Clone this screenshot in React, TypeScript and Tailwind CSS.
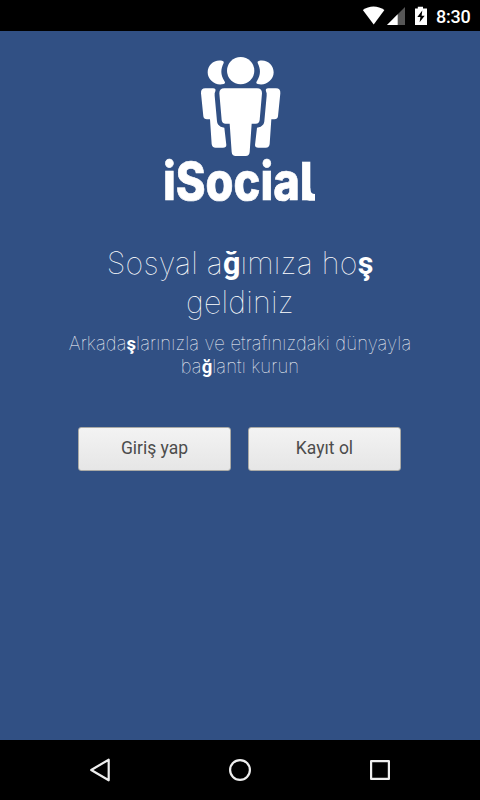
import React from 'react';

function StatusBar() {
  return (
    <header className="flex h-[31px] shrink-0 items-center justify-end bg-black text-white">
      <svg width="76" height="31" viewBox="0 0 76 31" fill="#fff">
        <path d="M2.8 10.1C9 5.3 18 5.3 24.4 10.1L13.7 24.5Z" />
        <path d="M45 7V25H27Z" fill="#565656" />
        <path d="M37.7 14.3V25H27Z" />
        <path d="M55 8.5h2.8V6.7h5.2v1.8H67V25H55Z" />
        <path d="M62.3 10.5L57.3 17h3.1l-.8 5.3 5.1-6.6h-3.1Z" fill="#000" />
      </svg>
      <span className="w-[44px] pt-0.5 text-[18px] font-medium leading-none tracking-[-0.2px]">8:30</span>
    </header>
  );
}

function Logo() {
  return (
    <svg className="shrink-0 overflow-visible" width="170" height="165" viewBox="0 0 510 495" fill="#fff">
      <circle cx="257" cy="77" r="41" />
      <path d="M203 48C178 42 158 60 158 82C158 105 182 124 206 117Q213 115 208 108C196 88 197 72 206 54Q208 49 203 48Z" />
      <path d="M311 48C336 42 356 60 356 82C356 105 332 124 308 117Q301 115 306 108C318 88 317 72 308 54Q306 49 311 48Z" />
      <path d="M208 130H306Q321 130 321 145L314 225Q313 236 302 236H290L284 321Q283 333 272 333H242Q231 333 230 321L224 236H212Q201 236 200 225L193 145Q193 130 208 130Z" />
      <path d="M151 130H174Q184 130 181 139Q178 144 179 152L186 229Q187 240 197 245L208 248L214 300Q214 308 204 308H182Q171 308 170 297L165 223H156Q146 223 145 214L138 145Q137 130 151 130Z" />
      <path d="M363 130H340Q330 130 333 139Q336 144 335 152L328 229Q327 240 317 245L306 248L300 300Q300 308 310 308H332Q343 308 344 297L349 223H358Q368 223 369 214L376 145Q377 130 363 130Z" />
      <text x="24" y="466" fontSize="157" fontWeight="800" textLength="449" lengthAdjust="spacingAndGlyphs" stroke="#fff" strokeWidth="2" className="font-['Inter',sans-serif]">
        iSocial
      </text>
      <path d="M455 430H466Q466 445 474 446L480 447V467H464Q455 467 450 460Z" />
    </svg>
  );
}

function Accent({ children }: { children: string }) {
  return <span className="font-['Roboto',sans-serif] font-bold tracking-normal text-white">{children}</span>;
}

function ActionButton({ children }: { children: string }) {
  return (
    <button className="h-[44px] w-[153px] rounded-[3px] border border-[#aaaaa6] bg-linear-to-b from-[#f3f3f3] to-[#e6e6e6] pb-px text-[17.5px] font-normal leading-none text-[#4c4c4c]">
      {children}
    </button>
  );
}

function NavigationBar() {
  return (
    <nav className="flex h-[60px] shrink-0 items-center justify-center gap-[112px] bg-black">
      <svg width="28" height="28" viewBox="0 0 28 28" fill="none" stroke="#eee" strokeWidth="2.2" strokeLinejoin="round">
        <path d="M22.7 3.7V24.3L5.2 14Z" />
      </svg>
      <svg width="28" height="28" viewBox="0 0 28 28" fill="none" stroke="#eee" strokeWidth="2.2">
        <circle cx="14" cy="14" r="9.9" />
      </svg>
      <svg width="28" height="28" viewBox="0 0 28 28" fill="none" stroke="#eee" strokeWidth="2.2" strokeLinejoin="round">
        <rect x="5.1" y="5.1" width="17.8" height="17.8" />
      </svg>
    </nav>
  );
}

export default function App() {
  return (
    <div className="flex h-[800px] w-[480px] flex-col overflow-hidden bg-[#315084] font-['Roboto',sans-serif]">
      <StatusBar />
      <main className="flex flex-1 flex-col items-center pt-[14px]">
        <Logo />
        <h1 className="mt-[33px] h-[78px] text-center font-['Inter',sans-serif] text-[30.5px] font-thin leading-[39px] tracking-[0.2px] text-white">
          <span className="block h-[39px] whitespace-nowrap">Sosyal a<Accent>ğ</Accent>ımıza ho<Accent>ş</Accent></span>
          <span className="block h-[39px]">geldiniz</span>
        </h1>
        <p className="mt-[11px] h-[46px] text-center font-['Inter',sans-serif] text-[18.5px] font-thin leading-[23px] tracking-[0.13px] text-white">
          <span className="block h-[23px] whitespace-nowrap">Arkada<Accent>ş</Accent>larınızla ve etrafınızdaki dünyayla</span>
          <span className="block h-[23px]">ba<Accent>ğ</Accent>lantı kurun</span>
        </p>
        <div className="mt-[49px] flex gap-[17px] pr-px">
          <ActionButton>Giriş yap</ActionButton>
          <ActionButton>Kayıt ol</ActionButton>
        </div>
      </main>
      <NavigationBar />
    </div>
  );
}
